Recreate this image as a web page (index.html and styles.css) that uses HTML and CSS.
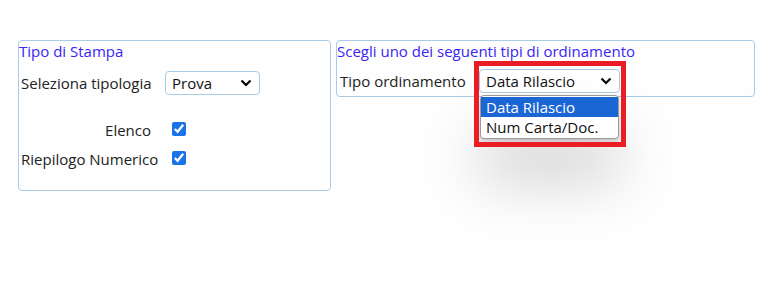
FILE: index.html
```html
<!DOCTYPE html>
<html lang="it">
<head>
    <meta charset="UTF-8">
    <title>Stampa</title>
    <link rel="stylesheet" href="styles.css">
</head>
<body>
    <div class="panels">
        <div class="box box-stampa">
            <div class="box-title">Tipo di Stampa</div>
            <table class="form-table">
                <tr>
                    <td class="lbl">Seleziona tipologia</td>
                    <td>
                        <div class="select select-prova">Prova</div>
                    </td>
                </tr>
                <tr class="spacer"><td></td><td></td></tr>
                <tr>
                    <td class="lbl right">Elenco</td>
                    <td><input type="checkbox" checked></td>
                </tr>
                <tr>
                    <td class="lbl">Riepilogo Numerico</td>
                    <td><input type="checkbox" checked></td>
                </tr>
            </table>
        </div>

        <div class="box box-ordine">
            <div class="box-title">Scegli uno dei seguenti tipi di ordinamento</div>
            <div class="row">
                <span class="lbl">Tipo ordinamento</span>
                <div class="select-wrap">
                    <div class="select select-ordine">Data Rilascio</div>
                    <ul class="dropdown">
                        <li class="active">Data Rilascio</li>
                        <li>Num Carta/Doc.</li>
                    </ul>
                    <div class="highlight"></div>
                </div>
            </div>
        </div>
    </div>
</body>
</html>
```

FILE: styles.css
```css
* {
    margin: 0;
    padding: 0;
    box-sizing: border-box;
}

html,
body {
    min-height: 100%;
    height: 100%;
}

body {
    font-family: "Open Sans", "Segoe UI", sans-serif;
    font-size: 15px;
    color: #222;
    background: #fdfefd;
    padding: 40px 0 0 18px;
}

.panels {
    display: flex;
    align-items: flex-start;
    gap: 5px;
}

.box {
    border: 1px solid #a9cbe6;
    border-radius: 4px;
}

.box-stampa {
    width: 313px;
    height: 151px;
}

.box-ordine {
    width: 419px;
    height: 57px;
}

.box-title {
    color: #3a24f5;
    line-height: 20px;
}

.form-table {
    border-collapse: collapse;
    margin: 7px 0 0 2px;
}

.form-table td {
    padding: 0;
    height: 29px;
    vertical-align: middle;
}

.form-table .spacer td {
    height: 18px;
}

.form-table .lbl {
    width: 144px;
    white-space: nowrap;
}

.form-table .right {
    text-align: right;
    padding-right: 14px;
}

.form-table input {
    width: 14px;
    height: 14px;
    margin: 3px 0 0 7px;
    accent-color: #1a73e8;
}

.select {
    height: 24px;
    line-height: 22px;
    border: 1px solid #a9cbe6;
    border-radius: 4px;
    padding-left: 6px;
    background: #fff url("data:image/svg+xml,%3Csvg xmlns='http://www.w3.org/2000/svg' width='12' height='8' viewBox='0 0 12 8'%3E%3Cpath d='M1.5 1.5 6 6l4.5-4.5' fill='none' stroke='%23000' stroke-width='2.2'/%3E%3C/svg%3E") no-repeat right 7px center;
    color: #111;
}

.select-prova {
    width: 95px;
}

.row {
    display: flex;
    align-items: center;
    margin-top: 8px;
}

.row .lbl {
    width: 142px;
    padding-left: 3px;
}

.select-wrap {
    position: relative;
}

.select-ordine {
    width: 141px;
}

.dropdown {
    position: absolute;
    top: 26px;
    left: 1px;
    width: 139px;
    list-style: none;
    background: #fff;
    border: 1px solid #9a9a9a;
    border-radius: 4px;
    box-shadow: 0 40px 60px rgba(0, 0, 0, 0.2), 0 2px 4px rgba(0, 0, 0, 0.2);
    padding: 1px 0;
    z-index: 2;
}

.dropdown li {
    height: 20px;
    line-height: 20px;
    padding-left: 5px;
    color: #111;
}

.dropdown li.active {
    background: #1a66d4;
    color: #fff;
}

.highlight {
    position: absolute;
    top: -8px;
    left: -5px;
    width: 152px;
    height: 86px;
    border: 5px solid #ea1c24;
    z-index: 3;
}
```
